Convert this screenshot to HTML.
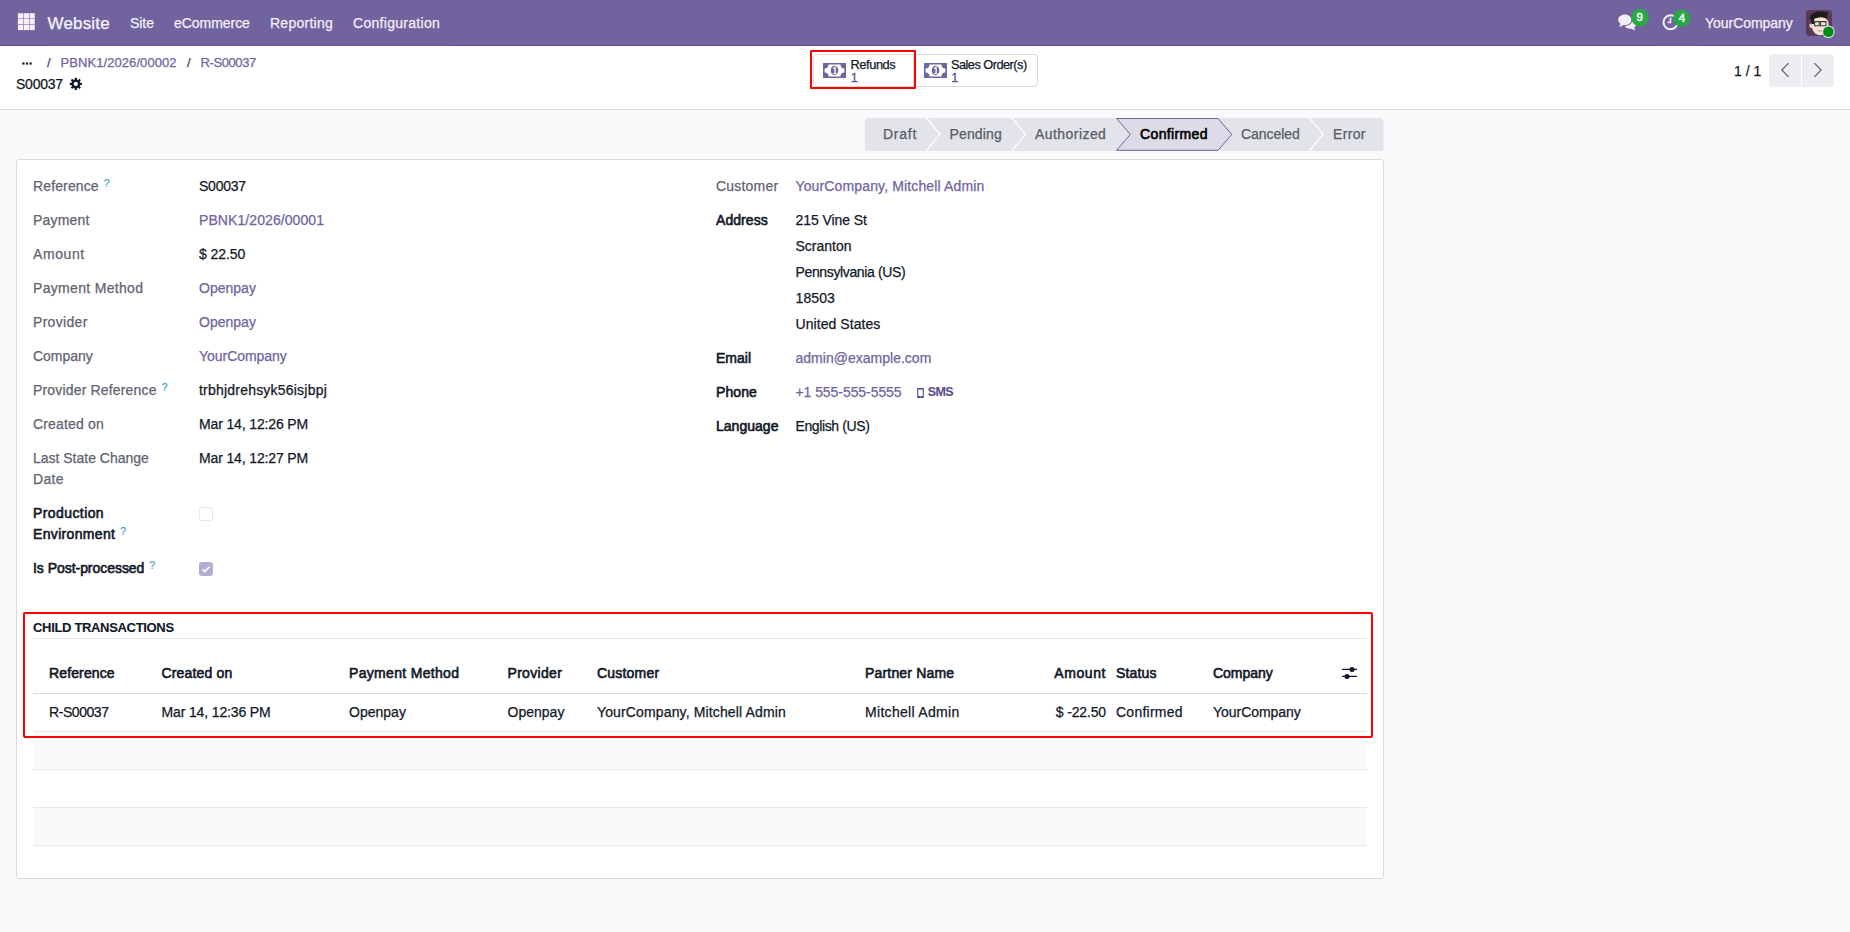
<!DOCTYPE html>
<html><head><meta charset="utf-8"><style>
html,body{margin:0;padding:0;width:1850px;height:932px;overflow:hidden;background:#fff;font-family:"Liberation Sans", sans-serif;}
.t{position:absolute;white-space:nowrap;-webkit-text-stroke:0.25px currentColor;}
.t.b{-webkit-text-stroke:0.1px currentColor;}
.t.m{-webkit-text-stroke:0.6px currentColor;}
sup.q{color:#3a9fc6;font-size:10.5px;font-weight:400;-webkit-text-stroke:0.2px #3a9fc6;vertical-align:top;position:relative;top:0px;margin-left:5px;line-height:14px;letter-spacing:0;}
</style></head><body>
<div style="position:absolute;left:0px;top:0px;width:1850px;height:46px;background:#71639e;"></div>
<div style="position:absolute;left:0px;top:45px;width:1850px;height:1px;background:#5a4e84;"></div>
<div style="position:absolute;left:47px;top:45px;width:403px;height:1px;background:#6a5c99;"></div>
<div style="position:absolute;left:1656px;top:45px;width:42px;height:1px;background:#6a5c99;"></div>
<div style="position:absolute;left:1800px;top:45px;width:50px;height:1px;background:#6a5c99;"></div>
<svg style="position:absolute;left:0;top:0" width="60" height="46"><rect x="17.9" y="13.2" width="5.3" height="5.3" fill="#f3f1f7"/><rect x="17.9" y="19.0" width="5.3" height="5.3" fill="#f3f1f7"/><rect x="17.9" y="24.799999999999997" width="5.3" height="5.3" fill="#f3f1f7"/><rect x="23.7" y="13.2" width="5.3" height="5.3" fill="#f3f1f7"/><rect x="23.7" y="19.0" width="5.3" height="5.3" fill="#f3f1f7"/><rect x="23.7" y="24.799999999999997" width="5.3" height="5.3" fill="#f3f1f7"/><rect x="29.5" y="13.2" width="5.3" height="5.3" fill="#f3f1f7"/><rect x="29.5" y="19.0" width="5.3" height="5.3" fill="#f3f1f7"/><rect x="29.5" y="24.799999999999997" width="5.3" height="5.3" fill="#f3f1f7"/></svg>
<div class="t" style="left:47.5px;top:10.96px;font-size:17px;line-height:25.5px;font-weight:400;color:#f6f5fa;letter-spacing:0.176px;">Website</div>
<div class="t" style="left:130px;top:12.65px;font-size:14px;line-height:21.0px;font-weight:400;color:#f1eff7;letter-spacing:-0.043px;">Site</div>
<div class="t" style="left:174px;top:12.65px;font-size:14px;line-height:21.0px;font-weight:400;color:#f1eff7;letter-spacing:-0.042px;">eCommerce</div>
<div class="t" style="left:270px;top:12.65px;font-size:14px;line-height:21.0px;font-weight:400;color:#f1eff7;letter-spacing:0.262px;">Reporting</div>
<div class="t" style="left:353px;top:12.65px;font-size:14px;line-height:21.0px;font-weight:400;color:#f1eff7;letter-spacing:0.294px;">Configuration</div>
<svg style="position:absolute;left:1612px;top:8px" width="90" height="30" viewBox="1612 8 90 30">
<path d="M1624.8 14.5c-3.6 0-6.6 2.3-6.6 5.2 0 1.6.9 3 2.4 4-.3 1.1-1 2.2-1.6 3 1.6-.2 3.1-.8 4.2-1.8.5.1 1 .1 1.6.1 3.6 0 6.6-2.3 6.6-5.3s-3-5.2-6.6-5.2z" fill="#f1eff7"/>
<path d="M1632.5 19.5c0 3.6-3.5 6.6-7.8 6.6.9 1.6 3 2.7 5.5 2.7.5 0 1-.1 1.4-.1 1 .8 2.4 1.3 3.9 1.4-.6-.7-1.1-1.6-1.4-2.6 1.3-.9 2.1-2.1 2.1-3.5 0-1.8-1.5-3.4-3.7-4.5z" fill="#f1eff7"/>
<circle cx="1640" cy="17.5" r="9" fill="#28a745"/>
<circle cx="1670.5" cy="22.3" r="7" fill="none" stroke="#f1eff7" stroke-width="2"/>
<path d="M1670.5 17.5v5h-3" fill="none" stroke="#f1eff7" stroke-width="1.6"/>
<circle cx="1681.7" cy="18.1" r="8.6" fill="#28a745"/>
</svg>
<div class="t" style="left:1636.6px;top:8.59px;font-size:11.5px;line-height:17.25px;font-weight:400;color:#fff;-webkit-text-stroke:0.45px #fff;letter-spacing:0px;">9</div>
<div class="t" style="left:1678.8px;top:10.19px;font-size:11.5px;line-height:17.25px;font-weight:400;color:#fff;-webkit-text-stroke:0.45px #fff;letter-spacing:0px;">4</div>
<div class="t" style="left:1705px;top:12.65px;font-size:14px;line-height:21.0px;font-weight:400;color:#f1eff7;letter-spacing:-0.034px;">YourCompany</div>
<svg style="position:absolute;left:1806px;top:10px" width="30" height="30" viewBox="0 0 30 30">
<defs><clipPath id="av"><rect x="0" y="0" width="26" height="26" rx="3"/></clipPath></defs>
<g clip-path="url(#av)">
<rect x="0" y="0" width="26" height="26" fill="#5b3b57"/>
<path d="M5.5 13.5c-1.6-.4-2.4 1-2 2.6.4 1.6 1.4 2.4 2.6 2.2z" fill="#f3d9c3"/>
<path d="M6 9.5c1.5-1.8 4-2.5 7.5-2.5 4 0 7 1.5 8.5 4 .8 2.2.8 5.2-.2 8-1.2 3.5-4 6-7.5 6.2-3.5.2-6.2-2-7.6-5.2C5.6 17 5.2 12 6 9.5z" fill="#f8e2cf"/>
<path d="M3.5 8.5C4.5 3.8 9 1.6 14 1.6c3.5 0 6.5.7 8.6 1.2-.7.9-1.3 1.8-1.5 3 .5 1 .6 2.3.4 3.4-1.6-1.3-4.5-2-7.8-1.8-2.2.1-4 .6-5.3 1.4-.4 1.6-.5 3.4-.3 5.3-.8-.2-1.6-.3-2.4 0-.6-1.6-.7-3.3-.4-4.6z" fill="#1d1b1c"/>
<path d="M8.6 11.6h4.6v4.2H8.6zM14.6 11.6h5.4v4.2h-5.4z" fill="#e8e8e8" stroke="#3a3a3a" stroke-width="1.1"/>
<path d="M12 20.5c1.3.7 3 .7 4.2 0" stroke="#b08a80" stroke-width="1" fill="none"/>
</g>
<circle cx="22.4" cy="21.8" r="6.3" fill="#e8e6f0"/>
<circle cx="22.4" cy="21.8" r="5.3" fill="#008a16"/>
</svg>
<div style="position:absolute;left:0px;top:46px;width:1850px;height:63px;background:#fff;"></div>
<div style="position:absolute;left:0px;top:109px;width:1850px;height:1px;background:#d8dadd;"></div>
<div style="position:absolute;left:0px;top:110px;width:1850px;height:822px;background:#f9fafb;"></div>
<svg style="position:absolute;left:20px;top:60px" width="16" height="8"><rect x="2.3" y="2.4" width="2.2" height="2.2" fill="#111827"/><rect x="5.9" y="2.4" width="2.2" height="2.2" fill="#111827"/><rect x="9.5" y="2.4" width="2.2" height="2.2" fill="#111827"/></svg>
<div class="t" style="left:47px;top:52.75px;font-size:13px;line-height:19.5px;font-weight:400;color:#3f4550;letter-spacing:1.172px;">/</div>
<div class="t" style="left:60.5px;top:52.75px;font-size:13px;line-height:19.5px;font-weight:400;color:#71639e;letter-spacing:0.074px;">PBNK1/2026/00002</div>
<div class="t" style="left:187px;top:52.75px;font-size:13px;line-height:19.5px;font-weight:400;color:#3f4550;letter-spacing:1.172px;">/</div>
<div class="t" style="left:200.5px;top:52.75px;font-size:13px;line-height:19.5px;font-weight:400;color:#71639e;letter-spacing:-0.402px;">R-S00037</div>
<div class="t" style="left:16px;top:73.65px;font-size:14px;line-height:21.0px;font-weight:400;color:#111827;letter-spacing:-0.242px;">S00037</div>
<svg style="position:absolute;left:69px;top:77px" width="14" height="14" viewBox="-6.8 -6.9 14 14"><g fill="#111827"><rect x="-1.1" y="-6.1" width="2.2" height="3" transform="rotate(0)"/><rect x="-1.1" y="-6.1" width="2.2" height="3" transform="rotate(45)"/><rect x="-1.1" y="-6.1" width="2.2" height="3" transform="rotate(90)"/><rect x="-1.1" y="-6.1" width="2.2" height="3" transform="rotate(135)"/><rect x="-1.1" y="-6.1" width="2.2" height="3" transform="rotate(180)"/><rect x="-1.1" y="-6.1" width="2.2" height="3" transform="rotate(225)"/><rect x="-1.1" y="-6.1" width="2.2" height="3" transform="rotate(270)"/><rect x="-1.1" y="-6.1" width="2.2" height="3" transform="rotate(315)"/><circle r="4.5"/></g><circle r="2.1" fill="#fff"/></svg>
<div style="position:absolute;left:813px;top:54px;width:101px;height:33px;border:1px solid #d8dadd;border-radius:4px 0 0 4px;box-sizing:border-box;background:#fff;"></div>
<div style="position:absolute;left:913px;top:54px;width:125px;height:33px;border:1px solid #d8dadd;border-radius:0 4px 4px 0;box-sizing:border-box;background:#fff;"></div>
<svg style="position:absolute;left:823px;top:63px" width="23" height="15" viewBox="0 0 23 15">
<rect width="23" height="15" fill="#71639e"/>
<path d="M5.5 1.6H17.5A3.6 3.6 0 0 0 21.4 5.4V9.6A3.6 3.6 0 0 0 17.5 13.4H5.5A3.6 3.6 0 0 0 1.6 9.6V5.4A3.6 3.6 0 0 0 5.5 1.6Z" fill="#fff"/>
<ellipse cx="11.5" cy="7.5" rx="3.8" ry="4.7" fill="#71639e"/>
<path d="M10.2 5.6l1.9-1.2v6.4" fill="none" stroke="#fff" stroke-width="1.3"/>
<path d="M10 10.6h3.5" stroke="#fff" stroke-width="1"/>
</svg>
<svg style="position:absolute;left:924px;top:63px" width="23" height="15" viewBox="0 0 23 15">
<rect width="23" height="15" fill="#71639e"/>
<path d="M5.5 1.6H17.5A3.6 3.6 0 0 0 21.4 5.4V9.6A3.6 3.6 0 0 0 17.5 13.4H5.5A3.6 3.6 0 0 0 1.6 9.6V5.4A3.6 3.6 0 0 0 5.5 1.6Z" fill="#fff"/>
<ellipse cx="11.5" cy="7.5" rx="3.8" ry="4.7" fill="#71639e"/>
<path d="M10.2 5.6l1.9-1.2v6.4" fill="none" stroke="#fff" stroke-width="1.3"/>
<path d="M10 10.6h3.5" stroke="#fff" stroke-width="1"/>
</svg>
<div class="t" style="left:850.5px;top:54.96px;font-size:12.8px;line-height:19.200000000000003px;font-weight:400;color:#111827;letter-spacing:-0.410px;">Refunds</div>
<div class="t" style="left:850.8px;top:69.29px;font-size:12.5px;line-height:18.75px;font-weight:400;color:#5f4f99;-webkit-text-stroke:0.3px #5f4f99;letter-spacing:0px;">1</div>
<div class="t" style="left:951px;top:54.96px;font-size:12.8px;line-height:19.200000000000003px;font-weight:400;color:#111827;letter-spacing:-0.543px;">Sales Order(s)</div>
<div class="t" style="left:951.3px;top:69.29px;font-size:12.5px;line-height:18.75px;font-weight:400;color:#5f4f99;-webkit-text-stroke:0.3px #5f4f99;letter-spacing:0px;">1</div>
<div style="position:absolute;left:810px;top:50px;width:106px;height:39px;border:2px solid #ff0000;box-sizing:border-box;border-radius:1px;"></div>
<div class="t" style="left:1734px;top:60.65px;font-size:14px;line-height:21.0px;font-weight:400;color:#111827;letter-spacing:0.022px;">1 / 1</div>
<div style="position:absolute;left:1769px;top:54px;width:32px;height:33px;background:#eceef1;border-radius:4px 0 0 4px;"></div>
<div style="position:absolute;left:1802px;top:54px;width:32px;height:33px;background:#eceef1;border-radius:0 4px 4px 0;"></div>
<svg style="position:absolute;left:1769px;top:54px" width="66" height="33" viewBox="0 0 66 33">
<path d="M19.6 9.2L12.8 16L19.6 22.8" fill="none" stroke="#555a60" stroke-width="1.1"/>
<path d="M45.4 9.2L52.2 16L45.4 22.8" fill="none" stroke="#555a60" stroke-width="1.1"/>
</svg>
<svg style="position:absolute;left:864px;top:117px" width="522" height="36" viewBox="864 117 522 36">
<path d="M868 118H1380.5A3 3 0 0 1 1383.5 121V148A3 3 0 0 1 1380.5 151H868A3 3 0 0 1 865 148V121A3 3 0 0 1 868 118Z" fill="#e2e4e9"/>
<path d="M926 117.5L940 134.3L926 151" fill="none" stroke="#fff" stroke-width="1.2"/><path d="M1011.5 117.5L1025.5 134.3L1011.5 151" fill="none" stroke="#fff" stroke-width="1.2"/><path d="M1309 117.5L1323 134.3L1309 151" fill="none" stroke="#fff" stroke-width="1.2"/><path d="M1116.5 118.5H1218L1231.8 134.4L1218 150.3H1116.5L1130.4 134.4Z" fill="#dedbe8" stroke="#71639e" stroke-width="1"/></svg>
<div class="t" style="left:883px;top:123.65px;font-size:14px;line-height:21.0px;font-weight:400;color:#585c67;letter-spacing:0.753px;">Draft</div>
<div class="t" style="left:949.5px;top:123.65px;font-size:14px;line-height:21.0px;font-weight:400;color:#585c67;letter-spacing:0.141px;">Pending</div>
<div class="t" style="left:1035px;top:123.65px;font-size:14px;line-height:21.0px;font-weight:400;color:#585c67;letter-spacing:0.441px;">Authorized</div>
<div class="t" style="left:1241px;top:123.65px;font-size:14px;line-height:21.0px;font-weight:400;color:#585c67;letter-spacing:-0.057px;">Canceled</div>
<div class="t" style="left:1333px;top:123.65px;font-size:14px;line-height:21.0px;font-weight:400;color:#585c67;letter-spacing:0.338px;">Error</div>
<div class="t m" style="left:1140px;top:123.65px;font-size:14px;line-height:21.0px;font-weight:400;color:#000;letter-spacing:0.366px;">Confirmed</div>
<div style="position:absolute;left:16px;top:159px;width:1368px;height:720px;background:#fff;border:1px solid #d8dadd;border-radius:3px;box-sizing:border-box;"></div>
<div class="t" style="left:33px;top:175.65px;font-size:14px;line-height:21.0px;font-weight:400;color:#5f636f;letter-spacing:0.132px;">Reference<sup class="q">?</sup></div>
<div class="t" style="left:199px;top:175.65px;font-size:14px;line-height:21.0px;font-weight:400;color:#111827;letter-spacing:-0.242px;">S00037</div>
<div class="t" style="left:33px;top:209.65px;font-size:14px;line-height:21.0px;font-weight:400;color:#5f636f;letter-spacing:0.183px;">Payment</div>
<div class="t" style="left:199px;top:209.65px;font-size:14px;line-height:21.0px;font-weight:400;color:#71639e;letter-spacing:0.081px;">PBNK1/2026/00001</div>
<div class="t" style="left:33px;top:243.65px;font-size:14px;line-height:21.0px;font-weight:400;color:#5f636f;letter-spacing:0.576px;">Amount</div>
<div class="t" style="left:199px;top:243.65px;font-size:14px;line-height:21.0px;font-weight:400;color:#111827;letter-spacing:-0.083px;">$ 22.50</div>
<div class="t" style="left:33px;top:277.65px;font-size:14px;line-height:21.0px;font-weight:400;color:#5f636f;letter-spacing:0.320px;">Payment Method</div>
<div class="t" style="left:199px;top:277.65px;font-size:14px;line-height:21.0px;font-weight:400;color:#71639e;letter-spacing:0.011px;">Openpay</div>
<div class="t" style="left:33px;top:311.65px;font-size:14px;line-height:21.0px;font-weight:400;color:#5f636f;letter-spacing:0.309px;">Provider</div>
<div class="t" style="left:199px;top:311.65px;font-size:14px;line-height:21.0px;font-weight:400;color:#71639e;letter-spacing:0.011px;">Openpay</div>
<div class="t" style="left:33px;top:345.65px;font-size:14px;line-height:21.0px;font-weight:400;color:#5f636f;letter-spacing:-0.036px;">Company</div>
<div class="t" style="left:199px;top:345.65px;font-size:14px;line-height:21.0px;font-weight:400;color:#71639e;letter-spacing:-0.034px;">YourCompany</div>
<div class="t" style="left:33px;top:379.65px;font-size:14px;line-height:21.0px;font-weight:400;color:#5f636f;letter-spacing:0.168px;">Provider Reference<sup class="q">?</sup></div>
<div class="t" style="left:199px;top:379.65px;font-size:14px;line-height:21.0px;font-weight:400;color:#111827;letter-spacing:0.211px;">trbhjdrehsyk56isjbpj</div>
<div class="t" style="left:33px;top:413.65px;font-size:14px;line-height:21.0px;font-weight:400;color:#5f636f;letter-spacing:0.156px;">Created on</div>
<div class="t" style="left:199px;top:413.65px;font-size:14px;line-height:21.0px;font-weight:400;color:#111827;letter-spacing:-0.137px;">Mar 14, 12:26 PM</div>
<div class="t" style="left:33px;top:447.65px;font-size:14px;line-height:21.0px;font-weight:400;color:#5f636f;letter-spacing:-0.012px;">Last State Change</div>
<div class="t" style="left:33px;top:468.65px;font-size:14px;line-height:21.0px;font-weight:400;color:#5f636f;letter-spacing:0.332px;">Date</div>
<div class="t" style="left:199px;top:447.65px;font-size:14px;line-height:21.0px;font-weight:400;color:#111827;letter-spacing:-0.137px;">Mar 14, 12:27 PM</div>
<div class="t m" style="left:33px;top:502.65px;font-size:14px;line-height:21.0px;font-weight:400;color:#111827;letter-spacing:0.412px;">Production</div>
<div class="t m" style="left:33px;top:523.65px;font-size:14px;line-height:21.0px;font-weight:400;color:#111827;letter-spacing:0.342px;">Environment<sup class="q">?</sup></div>
<div class="t m" style="left:33px;top:557.65px;font-size:14px;line-height:21.0px;font-weight:400;color:#111827;letter-spacing:-0.041px;">Is Post-processed<sup class="q">?</sup></div>
<div style="position:absolute;left:199px;top:507px;width:14px;height:14px;border:1px solid #e4e6ea;border-radius:3px;box-sizing:border-box;background:#fff;"></div>
<div style="position:absolute;left:199px;top:562px;width:14px;height:14px;border-radius:3px;background:#b6aed0;"></div>
<svg style="position:absolute;left:199px;top:562px" width="14" height="14"><path d="M3.5 7.2l2.3 2.3 4.7-4.7" fill="none" stroke="#fff" stroke-width="1.6"/></svg>
<div class="t" style="left:716px;top:175.65px;font-size:14px;line-height:21.0px;font-weight:400;color:#5f636f;letter-spacing:0.209px;">Customer</div>
<div class="t" style="left:795.5px;top:175.65px;font-size:14px;line-height:21.0px;font-weight:400;color:#71639e;letter-spacing:0.135px;">YourCompany, Mitchell Admin</div>
<div class="t m" style="left:716px;top:209.65px;font-size:14px;line-height:21.0px;font-weight:400;color:#111827;letter-spacing:0.071px;">Address</div>
<div class="t" style="left:795.5px;top:209.65px;font-size:14px;line-height:21.0px;font-weight:400;color:#111827;letter-spacing:-0.067px;">215 Vine St</div>
<div class="t" style="left:795.5px;top:235.65px;font-size:14px;line-height:21.0px;font-weight:400;color:#111827;letter-spacing:-0.006px;">Scranton</div>
<div class="t" style="left:795.5px;top:261.65px;font-size:14px;line-height:21.0px;font-weight:400;color:#111827;letter-spacing:-0.360px;">Pennsylvania (US)</div>
<div class="t" style="left:795.5px;top:287.65px;font-size:14px;line-height:21.0px;font-weight:400;color:#111827;letter-spacing:0.109px;">18503</div>
<div class="t" style="left:795.5px;top:313.65px;font-size:14px;line-height:21.0px;font-weight:400;color:#111827;letter-spacing:0.060px;">United States</div>
<div class="t m" style="left:716px;top:347.65px;font-size:14px;line-height:21.0px;font-weight:400;color:#111827;letter-spacing:0.009px;">Email</div>
<div class="t" style="left:795.5px;top:347.65px;font-size:14px;line-height:21.0px;font-weight:400;color:#71639e;letter-spacing:0.014px;">admin@example.com</div>
<div class="t m" style="left:716px;top:381.65px;font-size:14px;line-height:21.0px;font-weight:400;color:#111827;letter-spacing:0.084px;">Phone</div>
<div class="t" style="left:795.5px;top:381.65px;font-size:14px;line-height:21.0px;font-weight:400;color:#71639e;letter-spacing:-0.066px;">+1 555-555-5555</div>
<svg style="position:absolute;left:917px;top:388px" width="8" height="11"><path d="M0.2 0H6.8V10H0.2Z" fill="#56488e"/><rect x="1.3" y="1.5" width="4.4" height="6.6" fill="#fff"/><rect x="3.1" y="8.6" width="0.8" height="0.9" fill="#ccc"/></svg>
<div class="t b" style="left:927.8px;top:383.29px;font-size:12.5px;line-height:18.75px;font-weight:700;color:#5a4c90;letter-spacing:-0.698px;">SMS</div>
<div class="t m" style="left:716px;top:415.65px;font-size:14px;line-height:21.0px;font-weight:400;color:#111827;letter-spacing:0.025px;">Language</div>
<div class="t" style="left:795.5px;top:415.65px;font-size:14px;line-height:21.0px;font-weight:400;color:#111827;letter-spacing:-0.387px;">English (US)</div>
<div class="t b" style="left:33px;top:617.75px;font-size:13px;line-height:19.5px;font-weight:700;color:#111827;letter-spacing:-0.325px;">CHILD TRANSACTIONS</div>
<div style="position:absolute;left:33px;top:638px;width:1334px;height:1px;background:#e7e9ed;"></div>
<div style="position:absolute;left:33px;top:693px;width:1334px;height:1px;background:#d8dadd;"></div>
<div style="position:absolute;left:33px;top:732px;width:1334px;height:37px;background:#f9fafb;"></div>
<div style="position:absolute;left:33px;top:808px;width:1334px;height:37px;background:#f9fafb;"></div>
<div style="position:absolute;left:33px;top:731px;width:1334px;height:1px;background:#e7e9ed;"></div>
<div style="position:absolute;left:33px;top:769px;width:1334px;height:1px;background:#e7e9ed;"></div>
<div style="position:absolute;left:33px;top:807px;width:1334px;height:1px;background:#e7e9ed;"></div>
<div style="position:absolute;left:33px;top:845px;width:1334px;height:1px;background:#e7e9ed;"></div>
<div class="t m" style="left:49px;top:662.65px;font-size:14px;line-height:21.0px;font-weight:400;color:#111827;letter-spacing:0.132px;">Reference</div>
<div class="t m" style="left:161.5px;top:662.65px;font-size:14px;line-height:21.0px;font-weight:400;color:#111827;letter-spacing:0.156px;">Created on</div>
<div class="t m" style="left:349px;top:662.65px;font-size:14px;line-height:21.0px;font-weight:400;color:#111827;letter-spacing:0.320px;">Payment Method</div>
<div class="t m" style="left:507.5px;top:662.65px;font-size:14px;line-height:21.0px;font-weight:400;color:#111827;letter-spacing:0.309px;">Provider</div>
<div class="t m" style="left:597px;top:662.65px;font-size:14px;line-height:21.0px;font-weight:400;color:#111827;letter-spacing:0.209px;">Customer</div>
<div class="t m" style="left:865px;top:662.65px;font-size:14px;line-height:21.0px;font-weight:400;color:#111827;letter-spacing:0.176px;">Partner Name</div>
<div class="t m" style="left:1116px;top:662.65px;font-size:14px;line-height:21.0px;font-weight:400;color:#111827;letter-spacing:0.174px;">Status</div>
<div class="t m" style="left:1213px;top:662.65px;font-size:14px;line-height:21.0px;font-weight:400;color:#111827;letter-spacing:-0.036px;">Company</div>
<div class="t m" style="right:744px;top:662.65px;font-size:14px;line-height:21.0px;font-weight:400;color:#111827;letter-spacing:0.576px;">Amount</div>
<div class="t" style="left:49px;top:701.65px;font-size:14px;line-height:21.0px;font-weight:400;color:#111827;letter-spacing:-0.434px;">R-S00037</div>
<div class="t" style="left:161.5px;top:701.65px;font-size:14px;line-height:21.0px;font-weight:400;color:#111827;letter-spacing:-0.137px;">Mar 14, 12:36 PM</div>
<div class="t" style="left:349px;top:701.65px;font-size:14px;line-height:21.0px;font-weight:400;color:#111827;letter-spacing:0.011px;">Openpay</div>
<div class="t" style="left:507.5px;top:701.65px;font-size:14px;line-height:21.0px;font-weight:400;color:#111827;letter-spacing:0.011px;">Openpay</div>
<div class="t" style="left:597px;top:701.65px;font-size:14px;line-height:21.0px;font-weight:400;color:#111827;letter-spacing:0.135px;">YourCompany, Mitchell Admin</div>
<div class="t" style="left:865px;top:701.65px;font-size:14px;line-height:21.0px;font-weight:400;color:#111827;letter-spacing:0.308px;">Mitchell Admin</div>
<div class="t" style="left:1116px;top:701.65px;font-size:14px;line-height:21.0px;font-weight:400;color:#111827;letter-spacing:0.245px;">Confirmed</div>
<div class="t" style="left:1213px;top:701.65px;font-size:14px;line-height:21.0px;font-weight:400;color:#111827;letter-spacing:-0.034px;">YourCompany</div>
<div class="t" style="right:744px;top:701.65px;font-size:14px;line-height:21.0px;font-weight:400;color:#111827;letter-spacing:-0.148px;">$ -22.50</div>
<svg style="position:absolute;left:1340px;top:664px" width="20" height="18" viewBox="1340 664 20 18">
<path d="M1342 669.4H1357M1342 676.4H1357" stroke="#111827" stroke-width="1.3"/>
<circle cx="1352" cy="669.4" r="2.5" fill="#111827"/><circle cx="1347" cy="676.4" r="2.5" fill="#111827"/></svg>
<div style="position:absolute;left:23px;top:612px;width:1350px;height:126px;border:2px solid #ff0000;box-sizing:border-box;border-radius:2px;"></div>
</body></html>
